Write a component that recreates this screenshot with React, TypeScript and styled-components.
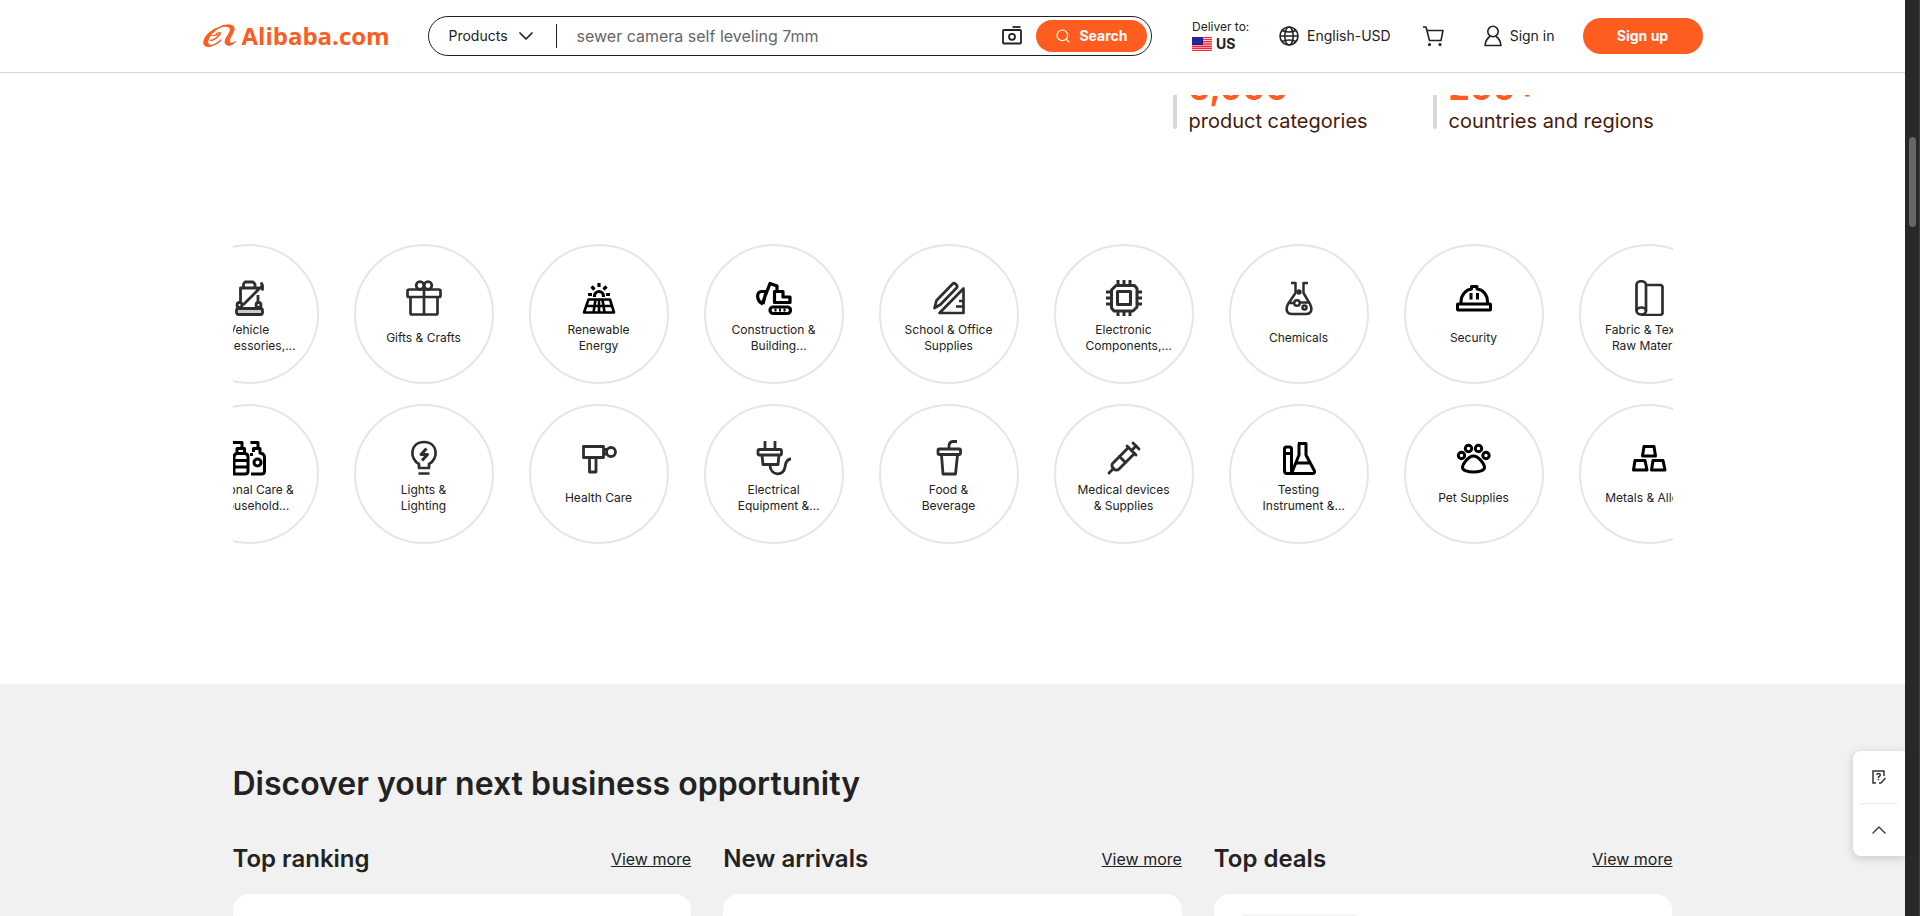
import React from 'react';
import styled, { createGlobalStyle } from 'styled-components';
import { ChevronDown, ChevronUp, Search, Syringe } from 'lucide-react';

const ORANGE = '#ff5c1f';
const INK = '#222222';

const GlobalStyle = createGlobalStyle`
  * { box-sizing: border-box; }
  body {
    margin: 0;
    background: #fff;
    color: ${INK};
    font-family: Inter, "Open Sans", sans-serif;
    font-size: 14px;
    line-height: 20px;
  }
  a { color: inherit; text-decoration: none; }
  button { font: inherit; color: inherit; border: 0; background: none; padding: 0; cursor: pointer; }
  h1, h2, h3, p, ul { margin: 0; padding: 0; }
  svg { display: block; flex: none; }
`;

const Shell = styled.div`
  position: relative;
  display: flex;
  height: 100vh;
  overflow: hidden;
`;

const Page = styled.div`
  flex: 1;
  min-width: 0;
  overflow: hidden;
`;

const ScrollTrack = styled.div`
  flex: none;
  width: 15px;
  padding: 137px 3px 0 4px;
  background: #282828;
  border-right: 1px solid #41413e;
`;

const ScrollThumb = styled.div`
  height: 90px;
  border-radius: 4px;
  background: #656565;
`;

const Header = styled.header`
  border-bottom: 1px solid #d6d6d6;
`;

const HeaderInner = styled.div`
  display: flex;
  align-items: center;
  max-width: 1500px;
  height: 72px;
  margin: 0 auto;
`;

const Logo = styled.a`
  display: flex;
  align-items: center;
  gap: 5px;
  width: 185px;
  margin-right: 40px;
  color: ${ORANGE};
  font: 700 24px/32px "Open Sans", sans-serif;
`;

const SearchForm = styled.form`
  display: flex;
  align-items: center;
  flex: 1;
  height: 40px;
  padding: 0 4px 0 20px;
  border: 1px solid ${INK};
  border-radius: 20px;
`;

const ScopeButton = styled.button`
  display: flex;
  align-items: center;
  gap: 6px;
`;

const ScopeDivider = styled.span`
  width: 1px;
  height: 24px;
  margin: 0 20px 0 18px;
  background: ${INK};
`;

const SearchInput = styled.input`
  flex: 1;
  min-width: 0;
  padding: 0;
  border: 0;
  outline: 0;
  background: none;
  font: 400 16px/24px Inter, sans-serif;
  &::placeholder { color: #666; opacity: 1; }
`;

const SearchButton = styled.button`
  display: flex;
  align-items: center;
  justify-content: center;
  gap: 8px;
  width: 111px;
  height: 32px;
  margin-left: 14px;
  border-radius: 16px;
  background: ${ORANGE};
  color: #fff;
  font-weight: 700;
`;

const Deliver = styled.div`
  width: 87px;
  margin-left: 40px;
  font-size: 12px;
  line-height: 16px;
`;

const Country = styled.div`
  display: flex;
  align-items: center;
  gap: 4px;
  font-size: 14px;
  line-height: 18px;
  font-weight: 700;
`;

const HeaderLink = styled.a<{ $gap?: number }>`
  display: flex;
  align-items: center;
  gap: 8px;
  margin-right: ${(p) => p.$gap ?? 32}px;
`;

const SignUp = styled.button`
  width: 120px;
  height: 36px;
  border-radius: 18px;
  background: ${ORANGE};
  color: #fff;
  font-weight: 700;
`;

const Stats = styled.section`
  display: flex;
  align-items: flex-end;
  justify-content: flex-end;
  max-width: 1440px;
  height: 38px;
  margin: 22px auto 0;
  overflow: hidden;
`;

const Stat = styled.div<{ $width: number }>`
  display: flex;
  align-items: flex-end;
  gap: 12px;
  width: ${(p) => p.$width}px;
`;

const StatBar = styled.span`
  width: 4px;
  height: 56px;
  margin-bottom: 4px;
  border-radius: 2px;
  background: #d9d9d9;
`;

const StatNumber = styled.strong`
  display: block;
  color: ${ORANGE};
  font-size: 34px;
  line-height: 42px;
  font-weight: 700;
`;

const StatLabel = styled.span`
  display: block;
  color: #471a0e;
  font-size: 20px;
  line-height: 24px;
`;

const Categories = styled.section`
  max-width: 1440px;
  margin: 111px auto 140px;
  overflow: hidden;
`;

const CategoryRow = styled.ul`
  display: flex;
  gap: 35px;
  margin: 0 0 0 -54px;
  list-style: none;
  & + & { margin-top: 20px; }
`;

const CategoryLink = styled.a`
  display: flex;
  flex-direction: column;
  align-items: center;
  width: 140px;
  height: 140px;
  padding: 34px 20px 0;
  border: 2px solid #e6e6e6;
  border-radius: 50%;
  font-size: 12px;
  line-height: 16px;
  text-align: center;
`;

const CategoryLabel = styled.span`
  display: flex;
  align-items: center;
  justify-content: center;
  height: 32px;
  margin-top: 6px;
  width: 94px;
`;

const ClampedText = styled.span`
  display: -webkit-box;
  width: 100%;
  overflow: hidden;
  -webkit-box-orient: vertical;
  -webkit-line-clamp: 2;
`;

const Discover = styled.section`
  background: #f1f1f1;
  padding-top: 80px;
`;

const DiscoverInner = styled.div`
  max-width: 1440px;
  margin: 0 auto;
`;

const Title = styled.h2`
  font-size: 32px;
  line-height: 40px;
  font-weight: 600;
`;

const Columns = styled.div`
  display: grid;
  grid-template-columns: repeat(3, 1fr);
  gap: 32px;
  margin-top: 39px;
`;

const ColumnHead = styled.div`
  display: flex;
  align-items: center;
  justify-content: space-between;
  height: 32px;
  margin-bottom: 19px;
`;

const ColumnTitle = styled.h3`
  font-size: 24px;
  line-height: 32px;
  font-weight: 600;
`;

const MoreLink = styled.a`
  font-size: 16px;
  line-height: 24px;
  text-decoration: underline;
`;

const Card = styled.div`
  height: 420px;
  padding: 20px 24px;
  border-radius: 16px;
  background: #fff;
`;

const Badge = styled.div`
  width: 123px;
  height: 40px;
  border-radius: 8px;
  background: #f4f4f4;
`;

const Floating = styled.aside`
  position: absolute;
  right: 15px;
  bottom: 60px;
  width: 52px;
  padding: 0 8px;
  border-radius: 8px 0 0 8px;
  background: #fff;
  box-shadow: 0 2px 10px rgba(0, 0, 0, 0.18);
`;

const FloatButton = styled.button`
  display: flex;
  align-items: center;
  justify-content: center;
  width: 100%;
  height: 52px;
  color: #444;
  & + & { border-top: 1px solid #e6e6e6; height: 53px; }
`;

const Icon = ({ w = 2, c = '#2e2e2e', children }: { w?: number; c?: string; children: React.ReactNode }) => (
  <svg width="36" height="36" viewBox="0 0 36 36" fill="none" stroke={c} strokeWidth={w} strokeLinejoin="round" aria-hidden="true">
    {children}
  </svg>
);

const icons: Record<string, React.ReactNode> = {
  vehicle: (
    <Icon w={2.8}>
      <path d="M12.500 8V4l1.500-2h8l2 2v4M9.500 23V8H27v3M27 15v8M12 25 32 5M30 2.500l1.500 3v5" />
      <circle cx="8.500" cy="25" r="2.500" /><circle cx="27.500" cy="25" r="2.500" />
      <rect x="5.500" y="28.500" width="26" height="6" rx="2" fill="#ccc" />
    </Icon>
  ),
  gift: (
    <Icon w={2.7}>
      <rect x="1.500" y="9.500" width="33" height="7.500" rx="1.500" />
      <path d="M4.500 17v16q0 1.500 1.500 1.500h24q1.500 0 1.500-1.500V17M18 9v25.500" />
      <circle cx="14" cy="5.500" r="3.800" /><circle cx="22" cy="5.500" r="3.800" />
    </Icon>
  ),
  solar: (
    <Icon w={3.2} c="#000">
      <path d="M18 3v4M10.500 6.500l3 3M25.500 6.500l-3 3M7 14.500h4M25 14.500h4M13.500 17v-1a4.500 4.500 0 0 1 9 0v1" />
      <path d="M7.500 19.500h21.500L33 32.500H3ZM5 26h26M14.500 19.500l-2 13M21.500 19.500l2 13M18 19.500v13" strokeWidth="2.600" />
    </Icon>
  ),
  excavator: (
    <Icon w={3.2} c="#000">
      <path d="M7 24C0 21 0 11 6 11.500h4M6.500 23 14 3.500 21 6v5M10 12 7 24" />
      <path d="M18.500 11.500H27V17h7v5.500H18.500Z" />
      <rect x="14" y="27" width="20.500" height="6.500" rx="3.200" />
      <path d="M18.500 30h2M23 30h2M27.500 30h2" />
    </Icon>
  ),
  school: (
    <Icon w={2.7}>
      <path d="M3.500 28 5.500 20.500 21.500 4q1.500-1.500 3 0l1 1q1.500 1.500 0 3L9.500 24.500Z" />
      <path d="M32.500 8.500V33H8.500ZM32.500 21H28M32.500 26.500H25" />
    </Icon>
  ),
  chip: (
    <Icon w={3}>
      <path d="M10 5.500h18.500l2.500 3V27l-4 4H8l-2.500-3V10Z" />
      <rect x="11.500" y="11.500" width="13" height="13" />
      <path d="M12 0v5M18 0v5M24 0v5M12 31v5M18 31v5M24 31v5M0 12h5M0 18h5M0 24h5M31 12h5M31 18h5M31 24h5" />
    </Icon>
  ),
  flask: (
    <Icon w={2.5}>
      <path d="M10 3h4.500v10L7 24c-3 6-1 10 4 10h14c5 0 7-4 4-10l-6.500-11V3H27M7.500 23H13M19 22.500h9" />
      <circle cx="16" cy="23" r="2.800" /><circle cx="23.500" cy="27.500" r="2" /><circle cx="18" cy="12" r="1.400" />
    </Icon>
  ),
  helmet: (
    <Icon w={3} c="#000">
      <rect x="1.500" y="24" width="33" height="6" rx="0.500" />
      <path d="M5 24v-2C5 15 10 9.500 15.500 9V6.500h5.500V9C27 9.500 31.500 15 31.500 22v2M15 13v6.500M21.500 13v6.500" />
    </Icon>
  ),
  fabric: (
    <Icon w={2.7}>
      <path d="M5.500 31V5c0-5 9.500-5 9.500 0v26M15 5h15l1.500 1.500v27L30 35H10" />
      <ellipse cx="10.300" cy="31" rx="4.700" ry="3.500" />
    </Icon>
  ),
  bottles: (
    <Icon w={3} c="#000">
      <path d="M0 2.500h11V8M6 13V8.500h7.500V13M3 34V17q0-3.500 3.500-3.500h7Q17 13.500 17 17v14q0 3-3 3H3ZM3 20.500h14M3 27h14" />
      <path d="M19.500 2.500h7.500V8M22.500 12V8.500H29V13l3 1q1.500 1 1.500 4v13q0 3-3 3H20M20.500 16v-3" />
      <circle cx="26.500" cy="22.500" r="3.500" />
    </Icon>
  ),
  bulb: (
    <Icon w={2.7}>
      <path d="M13 28v-4C3 19 4 2 18 2s15 17 5 22v4ZM12.500 33.500h11" />
      <path d="M20.500 8.500 15 14.500h6.500L16 20.500" strokeWidth="3" />
    </Icon>
  ),
  massage: (
    <Icon w={2.8}>
      <path d="M2.500 6.500h20v11h-20ZM8.500 17.500H15V32H8.500ZM22.500 9.500h4M22.500 14h4" />
      <circle cx="30" cy="12" r="4.500" />
    </Icon>
  ),
  plug: (
    <Icon w={2.8}>
      <path d="M9 1v8M19 1v8M6 15l1 9.500h15L23 15M14 25c0 11 14 12 15 2q1-8 6-8" />
      <rect x="2" y="9.500" width="23.500" height="5.500" rx="1.500" />
    </Icon>
  ),
  cup: (
    <Icon w={2.8}>
      <path d="M18 9V6q0-4 4-4.500h4M10.500 15l1.500 19h12.500L26.500 15" />
      <rect x="7" y="9" width="22.500" height="5.500" rx="1" />
    </Icon>
  ),
  syringe: <Syringe size={36} strokeWidth={1.9} color="#2e2e2e" aria-hidden="true" />,
  lab: (
    <Icon w={3} c="#000">
      <path d="M3.500 9q0-2 2-2h3q2 0 2 2v24.500H6q-2.500 0-2.500-3ZM3.500 13.500h7" />
      <path d="M17 3.500h8V15l8.500 16q.5 2.500-2 2.500h-21L18 15V3.500M14 23h15" />
    </Icon>
  ),
  paw: (
    <Icon w={3} c="#000">
      <circle cx="5.500" cy="15.500" r="3.200" /><circle cx="12.500" cy="8.500" r="3.200" />
      <circle cx="22.500" cy="8.500" r="3.200" /><circle cx="30" cy="15.500" r="3.200" />
      <path d="M17.500 16c5 0 11 8 11 11.500 0 6-22 6-22 0C6.500 24 12.500 16 17.500 16Z" />
    </Icon>
  ),
  metals: (
    <Icon w={3} c="#000">
      <path d="M13 6.500h10l1.500 9.500h-13ZM4 20.500h10L16 30H2.500ZM22 20.500h10L34 30H20.500Z" />
    </Icon>
  ),
};

const rows: [string, string][][] = [
  [
    ['vehicle', 'Vehicle Accessories, Electronics & Tools'],
    ['gift', 'Gifts & Crafts'],
    ['solar', 'Renewable Energy'],
    ['excavator', 'Construction & Building Machinery'],
    ['school', 'School & Office Supplies'],
    ['chip', 'Electronic Components, Accessories & Telecommunications'],
    ['flask', 'Chemicals'],
    ['helmet', 'Security'],
    ['fabric', 'Fabric & Textile Raw Material'],
  ],
  [
    ['bottles', 'Personal Care & Household Cleaning'],
    ['bulb', 'Lights & Lighting'],
    ['massage', 'Health Care'],
    ['plug', 'Electrical Equipment & Supplies'],
    ['cup', 'Food & Beverage'],
    ['syringe', 'Medical devices & Supplies'],
    ['lab', 'Testing Instrument & Equipment'],
    ['paw', 'Pet Supplies'],
    ['metals', 'Metals & Alloys'],
  ],
];

const LogoMark = () => (
  <svg width="34" height="24" viewBox="0 0 34 24" fill="none" stroke={ORANGE} strokeLinecap="round" aria-hidden="true">
    <path d="M9 11.500c5 0 9-1 8.500-2.500-.5-1-3.500 0-4.500 1" strokeWidth="1.200" />
    <path d="M17 9.500C16 13 11 16 7.500 16.500" strokeWidth="1.300" />
    <path d="M28 1.800C20 .5 6 6 2 15c-2 5 0 7.500 4 7 5-.5 9-3 12-6" strokeWidth="1.400" />
    <path d="M12 5C5 9 0 15 1 20c1 3 5 2.500 9 1.500-4 0-6-1.500-5-5C6 12.500 9 9 14 5Z" fill={ORANGE} strokeWidth="1" />
    <path d="M20 1.500c8-1.500 12 0 11 4.500-1 4.500-5 8-4.500 11.500.5 2 3 2 6 0-3 3.500-6.500 4.500-8.500 3.500C20 19 23 14 26 9.500c2.500-4.500 2-7-6-8Z" fill={ORANGE} strokeWidth="1" />
  </svg>
);

const CameraIcon = () => (
  <svg width="20" height="20" viewBox="0 0 20 20" fill="none" stroke={INK} strokeWidth="1.800" aria-hidden="true">
    <rect x="1" y="4" width="18" height="13.500" rx="1" />
    <circle cx="10" cy="10.800" r="3" />
    <path d="M10.500 1h8" />
  </svg>
);

const Flag = () => (
  <svg width="20" height="14" viewBox="0 0 20 14" aria-hidden="true">
    <path fill="#fff" d="M0 0h20v14H0z" />
    <path stroke="#f8283c" strokeWidth="1.400" d="M0 .5h20M0 2.600h20M0 4.800h20M0 7h20M0 9.200h20M0 11.300h20M0 13.500h20" />
    <path fill="#1f1f8f" d="M0 0h11v8H0z" />
    <path stroke="#5d5db4" strokeWidth=".5" strokeDasharray=".8 1" d="M1 1.500h9M1.500 3h8M1 4.500h9M1.500 6h8" />
  </svg>
);

const GlobeIcon = () => (
  <svg width="20" height="20" viewBox="0 0 20 20" fill="none" stroke={INK} strokeWidth="1.600" aria-hidden="true">
    <circle cx="10" cy="10" r="9" />
    <ellipse cx="10" cy="10" rx="4.200" ry="9" />
    <path d="M1 10h18M3 4.500q7 3 14 0M3 15.500q7-3 14 0" />
  </svg>
);

const CartIcon = () => (
  <svg width="22" height="20" viewBox="0 0 22 20" fill="none" stroke={INK} strokeWidth="1.600" aria-hidden="true">
    <path d="M0 1h3l3.500 13.500h11.500L20 4.500H4" strokeLinejoin="round" />
    <circle cx="6.500" cy="18.500" r=".8" fill={INK} /><circle cx="17" cy="18.500" r=".8" fill={INK} />
  </svg>
);

const UserIcon = () => (
  <svg width="18" height="22" viewBox="0 0 18 22" fill="none" stroke={INK} strokeWidth="1.600" strokeLinejoin="round" aria-hidden="true">
    <circle cx="9" cy="6.500" r="5.200" />
    <path d="M6 11.500C3.500 13 1.500 16.500 1 20.500h16c-.5-4-2.500-7.500-5-9" />
  </svg>
);

const FeedbackIcon = () => (
  <svg width="14" height="14" viewBox="0 0 14 14" fill="none" stroke="#333" strokeWidth="1.500" aria-hidden="true">
    <path d="M4 13H1V1h11v5M7 13h2l4.500-5M4.800 5q0-1.500 1.700-1.500 1.800 0 1.800 1.300T6.500 7v1M6.500 9v1.200" />
  </svg>
);

export default function App() {
  return (
    <Shell>
      <GlobalStyle />
      <Page>
        <Header>
          <HeaderInner>
            <Logo href="#"><LogoMark />Alibaba.com</Logo>
            <SearchForm onSubmit={(e) => e.preventDefault()}>
              <ScopeButton type="button">
                Products
                <ChevronDown size={24} strokeWidth={1.75} />
              </ScopeButton>
              <ScopeDivider />
              <SearchInput type="text" aria-label="Search products" placeholder="sewer camera self leveling 7mm" />
              <button type="button" aria-label="Search by image"><CameraIcon /></button>
              <SearchButton type="submit"><Search size={16} strokeWidth={1.75} />Search</SearchButton>
            </SearchForm>
            <Deliver>
              Deliver to:
              <Country><Flag />US</Country>
            </Deliver>
            <HeaderLink href="#"><GlobeIcon />English-USD</HeaderLink>
            <HeaderLink href="#" aria-label="Cart" $gap={39}><CartIcon /></HeaderLink>
            <HeaderLink href="#" $gap={28}><UserIcon />Sign in</HeaderLink>
            <SignUp type="button">Sign up</SignUp>
          </HeaderInner>
        </Header>

        <Stats>
          <Stat $width={260}>
            <StatBar />
            <div><StatNumber>5,900</StatNumber><StatLabel>product categories</StatLabel></div>
          </Stat>
          <Stat $width={240}>
            <StatBar />
            <div><StatNumber>200+</StatNumber><StatLabel>countries and regions</StatLabel></div>
          </Stat>
        </Stats>

        <Categories>
          {rows.map((row, i) => (
            <CategoryRow key={i}>
              {row.map(([icon, label]) => (
                <li key={icon}>
                  <CategoryLink href="#">
                    {icons[icon]}
                    <CategoryLabel><ClampedText>{label}</ClampedText></CategoryLabel>
                  </CategoryLink>
                </li>
              ))}
            </CategoryRow>
          ))}
        </Categories>

        <Discover>
          <DiscoverInner>
            <Title>Discover your next business opportunity</Title>
            <Columns>
              {['Top ranking', 'New arrivals', 'Top deals'].map((name) => (
                <div key={name}>
                  <ColumnHead>
                    <ColumnTitle>{name}</ColumnTitle>
                    <MoreLink href="#">View more</MoreLink>
                  </ColumnHead>
                  <Card>{name === 'Top deals' && <Badge />}</Card>
                </div>
              ))}
            </Columns>
          </DiscoverInner>
        </Discover>
      </Page>

      <ScrollTrack><ScrollThumb /></ScrollTrack>

      <Floating>
        <FloatButton type="button" aria-label="Feedback"><FeedbackIcon /></FloatButton>
        <FloatButton type="button" aria-label="Back to top"><ChevronUp size={24} strokeWidth={1.5} /></FloatButton>
      </Floating>
    </Shell>
  );
}
